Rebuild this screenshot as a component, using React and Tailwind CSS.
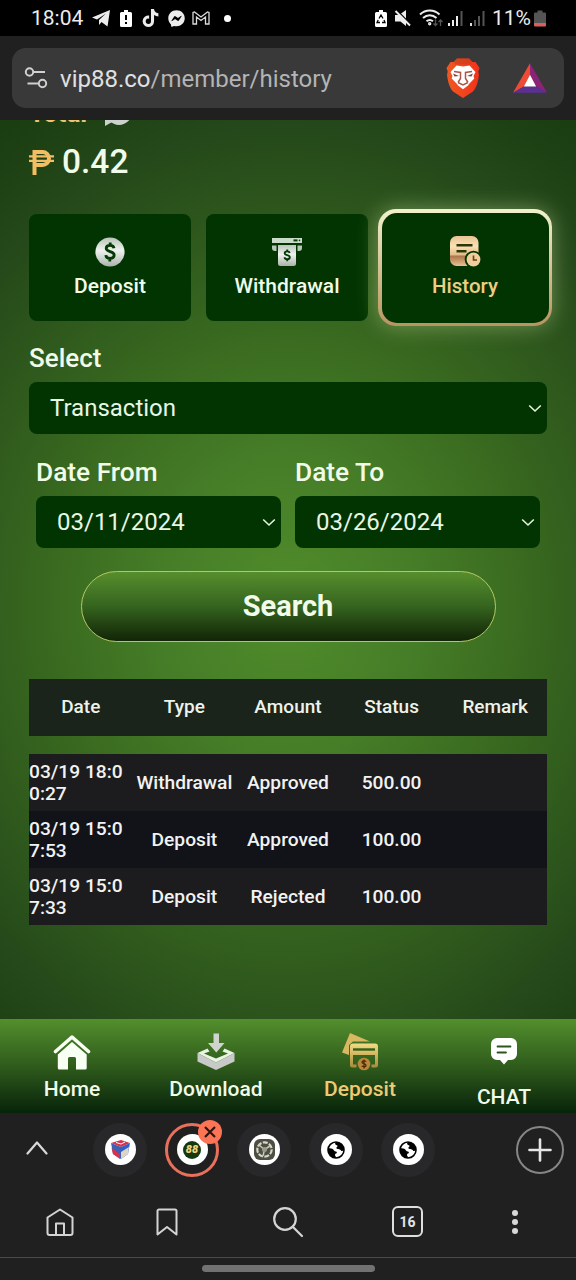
import React, { useState } from 'react';
import { FaTelegramPlane, FaTiktok, FaFacebookMessenger } from 'react-icons/fa';

const tabs = [
  { name: 'Deposit', icon: <DepositIcon /> },
  { name: 'Withdrawal', icon: <WithdrawalIcon /> },
  { name: 'History', icon: <HistoryIcon /> },
];

const columns = ['Date', 'Type', 'Amount', 'Status', 'Remark'];

const rows = [
  { date: '03/19 18:00:27', type: 'Withdrawal', amount: 'Approved', status: '500.00', remark: '' },
  { date: '03/19 15:07:53', type: 'Deposit', amount: 'Approved', status: '100.00', remark: '' },
  { date: '03/19 15:07:33', type: 'Deposit', amount: 'Rejected', status: '100.00', remark: '' },
];

/* ---------------- Icons ---------------- */

function SilverGradient({ id }) {
  return (
    <linearGradient id={id} x1="0" y1="0" x2="0" y2="1">
      <stop offset="0" stopColor="#b9c4b9" />
      <stop offset="0.45" stopColor="#eef2ee" />
      <stop offset="1" stopColor="#aab2aa" />
    </linearGradient>
  );
}

function DepositIcon() {
  return (
    <svg width="30" height="30" viewBox="0 0 30 30">
      <defs><SilverGradient id="dep" /></defs>
      <circle cx="15" cy="15" r="14.6" fill="url(#dep)" />
      <path d="M19 11.2c-.3-1.900-1.700-2.900-3.900-2.900-2.300 0-3.900 1.200-3.900 3 0 4.300 8 2.300 8 6.800 0 2-1.700 3.300-4.200 3.300-2.400 0-4-1.200-4.200-3.300M15.200 5.500v3M14.800 21.300v3.200" fill="none" stroke="#053a05" strokeWidth="2.800" />
    </svg>
  );
}

function WithdrawalIcon() {
  return (
    <svg width="30" height="30" viewBox="0 0 30 30">
      <defs><SilverGradient id="wit" /></defs>
      <path d="M0 1h30v5H0z" fill="#c9dcc9" />
      <path d="M21.500 3.400h4" stroke="#063a06" strokeWidth="2" />
      <circle cx="27.500" cy="3.400" r=".8" fill="#063a06" />
      <path d="M0 8.500h4.500v5.500H3a3 3 0 0 1-3-3zM25.500 8.500H30V11a3 3 0 0 1-3 3h-1.500z" fill="#b4c8b4" />
      <path d="M6 8h18v18.500a2.500 2.500 0 0 1-2.500 2.500h-13A2.500 2.500 0 0 1 6 26.500z" fill="url(#wit)" />
      <path d="M17.700 16c-.2-1-1-1.600-2.500-1.600-1.400 0-2.500.7-2.500 1.800 0 2.700 5.100 1.300 5.100 4.100 0 1.300-1.100 2-2.600 2-1.500 0-2.500-.7-2.600-2M15.200 12.500v2M15.200 22v2.200" fill="none" stroke="#053a05" strokeWidth="1.900" />
    </svg>
  );
}

function HistoryIcon() {
  return (
    <svg width="32" height="32" viewBox="0 0 32 32">
      <defs>
        <linearGradient id="his" x1="0" y1="0" x2="0" y2="1">
          <stop offset="0" stopColor="#e8c493" />
          <stop offset="0.35" stopColor="#fbe0b5" />
          <stop offset="0.64" stopColor="#e2b987" />
          <stop offset="0.66" stopColor="#a97448" />
          <stop offset="1" stopColor="#e9c290" />
        </linearGradient>
      </defs>
      <rect x="1" y="1" width="28.500" height="30" rx="6.500" fill="url(#his)" />
      <path d="M7.500 10.200h16M7.500 16.200h10" stroke="#2c3606" strokeWidth="2.600" />
      <circle cx="24.500" cy="24.500" r="8.800" fill="#013401" />
      <circle cx="24.500" cy="24.500" r="6.900" fill="#f1cf9d" />
      <path d="M24.500 20.500v4.500h3.500" fill="none" stroke="#6e3d1a" strokeWidth="1.600" />
    </svg>
  );
}

function BraveIcon() {
  return (
    <svg width="34" height="40" viewBox="0 0 34 40">
      <defs>
        <linearGradient id="brave" x1="0" x2="1">
          <stop offset="0" stopColor="#ee5a22" />
          <stop offset="1" stopColor="#f5301a" />
        </linearGradient>
      </defs>
      <path d="M11 .5h12l3.500 3.500h3l4 6-1.200 3.500.7 3.500c-.8 6-2.500 13-6 16.500L17 40l-10-6.500C3.500 30 1.800 23 1 17l.7-3.500L.5 10l4-6h3z" fill="url(#brave)" />
      <path d="M11 .5h12l3.500 3.500-2 2.500H9.500L7.500 4z" fill="#c43c1b" opacity=".55" />
      <path d="M10.500 7.500 17 8.500l6.500-1 6 6.500-2 4 .8 2.500-5.300 5.500-1 1.500-5 3.800-5-3.800-1-1.500-5.300-5.500.8-2.500-2-4z" fill="#fff" />
      <path d="m8 13.500 6.500 1v6L12 24.500M26 13.500l-6.500 1v6l2.500 4M12 24.500l5 2.500 5-2.500" fill="none" stroke="#a8564a" strokeWidth="1.500" />
      <path d="m7 15.500 6 2.500-4.500.5zM27 15.500 21 18l4.500.5z" fill="#7d453d" />
    </svg>
  );
}

function BatIcon() {
  return (
    <svg width="34" height="30" viewBox="0 0 36 31">
      <path d="M18 0v12L11.500 24.500 0 31z" fill="#ee4b37" />
      <path d="M18 0l18 31-11.500-6.500L18 12z" fill="#8b2376" />
      <path d="M0 31l11.500-6.500h13L36 31z" fill="#5b2f94" />
      <path d="M18 12l6.500 12.500h-13z" fill="#fff" />
    </svg>
  );
}

function GlobeTab() {
  return (
    <svg width="20" height="20" viewBox="0 0 20 20">
      <circle cx="10" cy="10" r="8" fill="#fff" stroke="#000" strokeWidth="1.600" />
      <path d="M10.500 2c-1.500 1-1.800 1.800-1 2.600.8.900 2 .3 2 1.500 0 1.100-1.300 1-1.100 2.200.2 1.200 3.600.4 4.400 1.900.6 1.100 1.400 1 3 .4C18 5.500 15 2.500 10.500 2zM2.200 8.500c2.700-.5 4.800.3 5.800 2 .8 1.300 2.900.6 2.900 2 0 1.200-1.900 1-1.900 2.300 0 1 .7 1.700 1.500 3C5.500 18.200 1.500 13.500 2.200 8.500z" fill="#000" />
    </svg>
  );
}

function BatteryAlert() {
  return (
    <svg width="12" height="17" viewBox="0 0 12 17">
      <path d="M4 0h4v2h2.500A1.500 1.500 0 0 1 12 3.500v12a1.500 1.500 0 0 1-1.500 1.500h-9A1.500 1.500 0 0 1 0 15.500v-12A1.500 1.500 0 0 1 1.500 2H4z" fill="#fff" />
      <path d="M6 5v5M6 12v2" stroke="#000" strokeWidth="2" />
    </svg>
  );
}

function Chevron() {
  return (
    <svg width="14" height="9" viewBox="0 0 14 9" fill="none" stroke="#e6f3df" strokeWidth="1.600">
      <path d="m1.200 1.500 5.800 5.500 5.800-5.500" />
    </svg>
  );
}

/* ---------------- Phone and browser bars ---------------- */

function StatusBar() {
  return (
    <div className="flex h-9 items-center bg-black pl-[31px] pr-[30px] text-[#ececec]">
      <span className="w-[53px] whitespace-nowrap text-[21px] leading-9">18:04</span>
      <svg className="ml-2" width="18" height="17" viewBox="0 0 18 17">
        <path d="M0 7.500 18 0l-2.500 16.500L9.500 12l-2.500 3V10l7-6.500L5 9.500z" fill="#ececec" />
      </svg>
      <div className="ml-[10px]"><BatteryAlert /></div>
      <FaTiktok className="ml-[10px] h-[18px] w-[17px]" />
      <FaFacebookMessenger className="ml-[9px] h-[17px] w-[17px]" />
      <svg className="ml-[7px]" width="18" height="14" viewBox="0 0 18 14" fill="none" stroke="#ddd" strokeWidth="1.300">
        <path d="M1 13V1.500L2.500 1 9 6l6.500-5L17 1.500V13h-3.500V6L9 9.500 4.500 6v7z" />
      </svg>
      <div className="ml-[14px] h-[7px] w-[7px] rounded-full bg-white" />

      <div className="ml-auto flex items-center">
        <svg width="12" height="17" viewBox="0 0 12 17">
          <path d="M4 0h4v2h2.500A1.500 1.500 0 0 1 12 3.500v12a1.500 1.500 0 0 1-1.500 1.500h-9A1.500 1.500 0 0 1 0 15.500v-12A1.500 1.500 0 0 1 1.500 2H4z" fill="#fff" />
          <path d="M4 8.500 6 5l2 3.500M9 10l1 2.500H7M5 12.500H2L3.200 10" fill="none" stroke="#000" strokeWidth="1.300" />
        </svg>
        <svg className="ml-[7px]" width="18" height="17" viewBox="0 0 18 17">
          <path d="M1 5h4L12 0v16L6.500 11.500H1z" fill="#ececec" />
          <path d="M2.500 0l15 15" stroke="#000" strokeWidth="1.500" />
          <path d="M1.500 1l14.500 14.500" stroke="#ececec" strokeWidth="2" />
        </svg>
        <svg className="ml-[7px]" width="24" height="18" viewBox="0 0 24 18" fill="none" stroke="#ececec" strokeWidth="2">
          <path d="M1 5.500c5.500-5.300 14-5.300 19.500 0M4 9c4-3.800 9.500-3.800 13.500 0M7.500 12.300c2-1.700 4.500-1.700 6.500 0" />
          <circle cx="10.700" cy="14.800" r=".7" />
          <path d="M16.500 10.500v6M14.500 14.500l2 2 2-2M21.500 17v-6M19.500 13l2-2 2 2" stroke="#555" strokeWidth="1.300" />
        </svg>
        <svg className="ml-[5px]" width="15" height="17" viewBox="0 0 15 17">
          <path d="M0 13h2v3H0zM4 10h2v6H4zM8 6h2v10H8z" fill="#ececec" />
          <path d="M12.500 1h2v15h-2z" fill="#555" />
        </svg>
        <svg className="ml-[7px]" width="15" height="17" viewBox="0 0 15 17">
          <path d="M0 13h2v3H0z" fill="#ddd" />
          <path d="M4 10h2v6H4zM8 6h2v10H8zM12.500 1h2v15h-2z" fill="#555" />
        </svg>
        <span className="ml-[7px] w-[39px] whitespace-nowrap text-[21px] leading-9">11%</span>
        <svg className="ml-[3px]" width="12" height="17" viewBox="0 0 12 16">
          <path d="M3.500 0h5v2H11a1 1 0 0 1 1 1v10H0V3a1 1 0 0 1 1-1h2.500z" fill="#555" />
          <path d="M0 12.500h12V15a1 1 0 0 1-1 1H1a1 1 0 0 1-1-1z" fill="#d9615a" />
        </svg>
      </div>
    </div>
  );
}

function AddressBar() {
  return (
    <div className="flex h-[84px] items-center bg-[#202020] px-3">
      <div className="flex h-[60px] w-full items-center rounded-[14px] bg-[#393939] pl-3 pr-[17px]">
        <svg width="24" height="24" viewBox="0 0 24 24" fill="none" stroke="#d0d0d0" strokeWidth="2">
          <circle cx="5.500" cy="6" r="3.700" />
          <path d="M9.500 6H21M3.500 17.500H14" />
          <circle cx="18.500" cy="17.500" r="3.700" />
        </svg>
        <div className="ml-3 mt-[2px] text-[24px] text-[#b4b4b4]">
          <span className="text-[#e0e0e0]">vip88.co</span>/member/history
        </div>
        <div className="ml-auto flex items-center gap-[33px]">
          <BraveIcon />
          <BatIcon />
        </div>
      </div>
    </div>
  );
}

function BrowserTab({ active, children }) {
  return (
    <div className={`relative flex h-[54px] w-[54px] items-center justify-center rounded-full ${active ? 'border-[3px] border-[#e8705c]' : 'bg-[#28282a]'}`}>
      <div className="flex h-[31px] w-[31px] shrink-0 items-center justify-center rounded-full bg-white">
        {children}
      </div>
      {active && (
        <button className="absolute -right-[6px] -top-[6px] flex h-6 w-6 items-center justify-center rounded-full bg-[#fb7456]">
          <svg width="12" height="12" viewBox="0 0 12 12" stroke="#2a1712" strokeWidth="2.200">
            <path d="M1 1l10 10M11 1L1 11" />
          </svg>
        </button>
      )}
    </div>
  );
}

function BrowserBottom() {
  return (
    <div className="bg-[#202020]">
      <div className="flex h-[73px] items-center pl-[26px] pr-3">
        <svg className="-mt-[3px]" width="22" height="14" viewBox="0 0 22 14" fill="none" stroke="#d8d8d8" strokeWidth="2.200" strokeLinecap="round" strokeLinejoin="round">
          <path d="M1.500 12.500 11 1.500l9.500 11" />
        </svg>
        <div className="ml-[45px] flex gap-[18px]">
          <BrowserTab>
            <svg width="21" height="21" viewBox="0 0 21 21">
              <path d="M1 4 11 1l9 3-9 4z" fill="#d6334a" />
              <path d="M6 3.500l5 1.500 4-2" fill="none" stroke="#fff" />
              <path d="M1 4l10 4v12L3 15z" fill="#3d5fb5" />
              <path d="M1.500 9 10 15v5l-7-5z" fill="#d6334a" />
              <path d="M20 4l-9 4v12l7-5z" fill="#2e62c9" />
              <path d="M11 13l8-5-1 7-7 5z" fill="#ddd6c8" />
            </svg>
          </BrowserTab>
          <BrowserTab active>
            <div className="flex h-[18px] w-[18px] items-center justify-center rounded-full bg-[#15380f] text-[11px] font-black italic leading-none text-[#f1d67c]">88</div>
          </BrowserTab>
          <BrowserTab>
            <svg width="21" height="21" viewBox="0 0 21 21">
              <rect width="21" height="21" rx="6" fill="#4c4f42" />
              <circle cx="10.500" cy="10.500" r="7.200" fill="none" stroke="#d8d8c8" strokeWidth="2.200" strokeDasharray="5 1.400" />
              <path d="M5 6l5.500 4.500L16 7M10.500 10.500 9 17" fill="none" stroke="#c9c9b8" strokeWidth="1.500" />
              <circle cx="10.500" cy="10.500" r="2.500" fill="#9a9b8a" />
            </svg>
          </BrowserTab>
          <BrowserTab><GlobeTab /></BrowserTab>
          <BrowserTab><GlobeTab /></BrowserTab>
        </div>
        <button className="ml-auto flex h-12 w-12 items-center justify-center rounded-full border-[2.5px] border-[#868686]">
          <svg width="24" height="24" viewBox="0 0 24 24" stroke="#e6e6e6" strokeWidth="2.600" strokeLinecap="round">
            <path d="M12 1.500v21M1.500 12h21" />
          </svg>
        </button>
      </div>

      <div className="flex h-[72px] items-center border-b border-[#4a4a4a] pl-[46px]">
        <svg width="28" height="28" viewBox="0 0 28 28" fill="none" stroke="#d4d4d4" strokeWidth="2" strokeLinejoin="round">
          <path d="M1.500 9.500 14 1.500l12.500 8V25a2 2 0 0 1-2 2h-21a2 2 0 0 1-2-2z" />
          <path d="M10 27V15.500h8V27" />
        </svg>
        <svg className="ml-[82px]" width="22" height="28" viewBox="0 0 22 28" fill="none" stroke="#d4d4d4" strokeWidth="2" strokeLinejoin="round">
          <path d="M1.500 3a1.500 1.500 0 0 1 1.500-1.500h16A1.500 1.500 0 0 1 20.500 3v23.500L11 19l-9.500 7.500z" />
        </svg>
        <svg className="ml-[94px]" width="32" height="32" viewBox="0 0 32 32" fill="none" stroke="#d4d4d4" strokeWidth="2.200" strokeLinecap="round">
          <circle cx="13" cy="13" r="10.800" />
          <path d="m21 21 9 9" />
        </svg>
        <div className="ml-[88px] flex h-[31px] w-[31px] items-center justify-center rounded-md border-2 border-[#dedede] text-[14px] font-bold leading-none text-[#e4e4e4]">16</div>
        <svg className="ml-[89px]" width="6" height="24" viewBox="0 0 6 24" fill="#d8d8d8">
          <circle cx="3" cy="3" r="3" />
          <circle cx="3" cy="12" r="3" />
          <circle cx="3" cy="21" r="3" />
        </svg>
      </div>

      <div className="flex h-[22px] justify-center pt-[7px]">
        <div className="h-[7px] w-[173px] rounded-full bg-[#727272]" />
      </div>
    </div>
  );
}

/* ---------------- Page ---------------- */

function SelectBox({ value, className }) {
  return (
    <button className={`flex h-[52px] items-center justify-between rounded-lg bg-[#013401] pl-[21px] pr-[5px] text-[24px] text-[#e9f6e4] ${className}`}>
      {value}
      <Chevron />
    </button>
  );
}

function SiteNav() {
  return (
    <div className="grid h-[94px] grid-cols-4 bg-linear-to-b from-[#538f2d] via-[#2f5c1c] to-[#08240a] text-[21px] font-medium text-[#f0fbe9]">
      <div className="flex flex-col items-center pt-[14px]">
        <svg width="38" height="38" viewBox="0 0 38 38" fill="#f8fff3">
          <path d="M2.500 18.500 19 4l16.500 14.500" fill="none" stroke="#f8fff3" strokeWidth="3.600" strokeLinecap="round" strokeLinejoin="round" />
          <path d="M19 9 4.800 21.500V35a1.500 1.500 0 0 0 1.500 1.500H15V25.500a1.500 1.500 0 0 1 1.500-1.500h5a1.500 1.500 0 0 1 1.500 1.500v11h9.200a1.500 1.500 0 0 0 1.500-1.500V21.500z" />
        </svg>
        <span className="mt-1 leading-7">Home</span>
      </div>
      <div className="flex flex-col items-center pt-[14px]">
        <svg width="38" height="38" viewBox="0 0 38 38">
          <path d="M10.500 15.500.5 20 19 29.500 37.500 20l-10-4.500-2 3 5.500 2L19 25.500 7 20.500l5.500-2z" fill="#e9f3e4" />
          <path d="M.5 20v8.500L19 37v-7.500zM37.500 20v8.500L19 37v-7.500z" fill="#c7cac7" />
          <path d="M16.500.5h5.500v9.500h5.500L19.300 19.500 11 10h5.500z" fill="#cfd4cf" />
        </svg>
        <span className="mt-1 leading-7">Download</span>
      </div>
      <div className="flex flex-col items-center pt-[14px] text-[#efca72]">
        <svg width="38" height="38" viewBox="0 0 38 38">
          <defs>
            <linearGradient id="cards" x1="0" y1="0" x2="0" y2="1">
              <stop offset="0" stopColor="#f3dc82" />
              <stop offset="1" stopColor="#a98a3c" />
            </linearGradient>
          </defs>
          <path d="M9 0 29 8.500H12L8 12v10L1 19.500z" fill="#d9b863" />
          <path d="M12 10.500h22a3 3 0 0 1 3 3V32a2.500 2.500 0 0 1-2.500 2.500H30.500v-3H34V22H12v9.500h3.500v3h-4A2.500 2.500 0 0 1 9 32V13.500a3 3 0 0 1 3-3z" fill="url(#cards)" />
          <path d="M12 16.500h22" stroke="#32611b" strokeWidth="2.400" />
          <circle cx="23" cy="31" r="6.300" fill="#b8893b" />
          <path d="M25 28.700c-1-1.200-4-1.200-4 .5s4 1.300 4 3.200-3 1.800-4.200.5M23 26.500v9" fill="none" stroke="#4e2a0b" strokeWidth="1.300" />
        </svg>
        <span className="mt-1 leading-7">Deposit</span>
      </div>
      <div className="flex flex-col items-center pt-[18px]">
        <svg width="28" height="28" viewBox="0 0 28 28">
          <path d="M7 1h14a6 6 0 0 1 6 6v10a6 6 0 0 1-6 6h-3l-4 4.500L10 23H7a6 6 0 0 1-6-6V7a6 6 0 0 1 6-6z" fill="#fff" />
          <path d="M7.500 9.500h13M7.500 15.500h8.500" stroke="#2e5420" strokeWidth="1.800" strokeLinecap="round" />
        </svg>
        <span className="mt-[18px] leading-7">CHAT</span>
      </div>
    </div>
  );
}

export default function App() {
  const [activeTab] = useState('History');

  return (
    <div className="flex h-[1280px] w-[576px] flex-col overflow-hidden bg-black font-[Roboto,sans-serif]">
      <StatusBar />
      <AddressBar />

      <div className="h-[899px] overflow-hidden bg-[radial-gradient(ellipse_500px_580px_at_50%_54%,#508c2b_0%,#467e28_25%,#3b6c20_45%,#33601e_58%,#25491a_82%,#1a3d11_100%)] px-[29px] text-[#f0fbe9]">
        {/* balance, scrolled partly under the address bar */}
        <div className="-mt-[21px] flex h-7 items-center text-[26px] font-bold leading-7 text-[#efc46f]">
          Total
          <svg className="ml-[17px]" width="30" height="28" viewBox="0 0 30 28" fill="none" stroke="#ccd2cc" strokeWidth="5">
            <path d="M4 12a11 11.500 0 0 0 22 0" />
            <path d="M1 16v11l9-5z" fill="#ccd2cc" stroke="none" />
          </svg>
        </div>
        <div className="mt-[15px] flex h-10 items-center text-[33.500px] font-medium">
          <svg width="25" height="25" viewBox="0 0 25 25" fill="none" stroke="#f4bd62">
            <path d="M5.500 25V2h8a6.500 6.500 0 0 1 0 13h-8" strokeWidth="4" />
            <path d="M0 6.300h25M0 10.800h25" strokeWidth="2.200" />
          </svg>
          <span className="ml-2">0.42</span>
        </div>

        {/* tabs */}
        <div className="mt-[32px] flex h-[107px] gap-[15px]">
          {tabs.map((tab) => {
            const content = (
              <>
                {tab.icon}
                <span className="mt-[7px] leading-6">{tab.name}</span>
              </>
            );
            return tab.name === activeTab ? (
              <div
                key={tab.name}
                className="-my-[5px] ml-[-5px] -mr-[6px] w-[174px] shrink-0 rounded-[18px] bg-linear-to-b from-[#f0f2cc] to-[#b8945f] p-[3.5px] shadow-[0_0_22px_rgba(205,225,160,0.45)]"
              >
                <div className="flex h-full w-full flex-col items-center rounded-[15px] bg-[#013401] pt-[22.5px] text-[20.500px] font-medium text-[#efcd85]">
                  {content}
                </div>
              </div>
            ) : (
              <div key={tab.name} className="flex w-[162px] shrink-0 flex-col items-center rounded-lg bg-[#013401] pt-[23px] text-[21px] font-medium">
                {content}
              </div>
            );
          })}
        </div>

        {/* filters */}
        <div className="mt-[21px] h-[32px] text-[26px] font-medium leading-[32px]">Select</div>
        <SelectBox value="Transaction" className="mt-[8px] w-full" />
        <div className="mt-[22px] grid grid-cols-2 gap-[14px] px-[7px]">
          <div>
            <div className="h-[32px] text-[26.300px] font-medium leading-[32px]">Date From</div>
            <SelectBox value="03/11/2024" className="mt-[8px] w-full" />
          </div>
          <div>
            <div className="h-[32px] text-[26.300px] font-medium leading-[32px]">Date To</div>
            <SelectBox value="03/26/2024" className="mt-[8px] w-full" />
          </div>
        </div>
        <button className="mx-auto mt-[23px] block h-[71px] w-[415px] rounded-full border border-[#b3c765] bg-linear-to-b from-[#578e2c] via-[#35641f] to-[#122507] text-[29px] font-bold">
          Search
        </button>

        {/* history table */}
        <div className="mt-[37px] grid h-[57px] grid-cols-5 items-center bg-[#1b241a] text-center text-[19px] font-medium text-[#eef2ec]">
          {columns.map((name) => (
            <div key={name}>{name}</div>
          ))}
        </div>
        <div className="mt-[18px] text-[19.200px] font-medium leading-[22px] text-[#f2f2f2]">
          {rows.map((row) => (
            <div key={row.date} className="grid h-[57px] grid-cols-5 items-center bg-[#1c1c1e] text-center even:bg-[#111318]">
              <div className="break-all text-left">{row.date}</div>
              <div>{row.type}</div>
              <div>{row.amount}</div>
              <div>{row.status}</div>
              <div>{row.remark}</div>
            </div>
          ))}
        </div>
      </div>

      <SiteNav />
      <BrowserBottom />
    </div>
  );
}
